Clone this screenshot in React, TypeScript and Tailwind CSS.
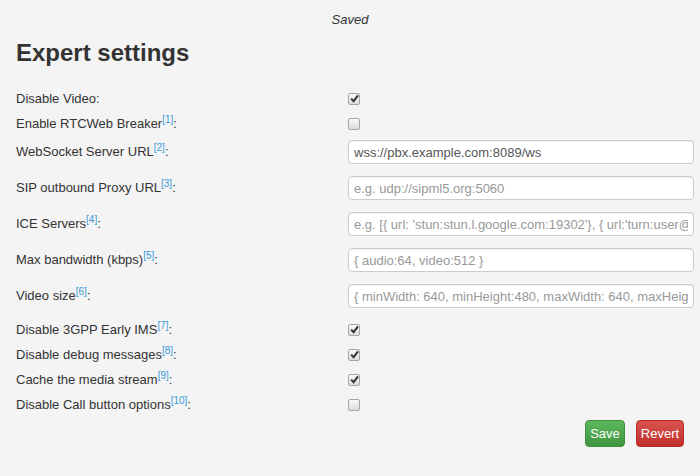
import React from "react";

type Row =
  | { kind: "check"; label: string; ref?: number; checked: boolean }
  | { kind: "text"; label: string; ref?: number; value?: string; placeholder?: string };

const top: Row[] = [
  { kind: "check", label: "Disable Video", checked: true },
  { kind: "check", label: "Enable RTCWeb Breaker", ref: 1, checked: false },
];

const fields: Row[] = [
  { kind: "text", label: "WebSocket Server URL", ref: 2, value: "wss://pbx.example.com:8089/ws" },
  { kind: "text", label: "SIP outbound Proxy URL", ref: 3, placeholder: "e.g. udp://sipml5.org:5060" },
  {
    kind: "text",
    label: "ICE Servers",
    ref: 4,
    placeholder: "e.g. [{ url: 'stun:stun.l.google.com:19302'}, { url:'turn:user@numb.viagenie.ca', credential:'myPassword'}]",
  },
  { kind: "text", label: "Max bandwidth (kbps)", ref: 5, placeholder: "{ audio:64, video:512 }" },
  {
    kind: "text",
    label: "Video size",
    ref: 6,
    placeholder: "{ minWidth: 640, minHeight:480, maxWidth: 640, maxHeight:480 }",
  },
];

const bottom: Row[] = [
  { kind: "check", label: "Disable 3GPP Early IMS", ref: 7, checked: true },
  { kind: "check", label: "Disable debug messages", ref: 8, checked: true },
  { kind: "check", label: "Cache the media stream", ref: 9, checked: true },
  { kind: "check", label: "Disable Call button options", ref: 10, checked: false },
];

const Label = ({ text, n }: { text: string; n?: number }) => (
  <label className="w-[332px] shrink-0 text-[13px] leading-[16px] text-[#333]">
    {text}
    {n !== undefined && <sup className="text-[10px] text-[#3a9ad9]">[{n}]</sup>}
    :
  </label>
);

const Check = ({ on }: { on: boolean }) => (
  <span className="flex h-[12px] w-[12px] items-center justify-center rounded-[2px] border border-[#a6a6a6] bg-gradient-to-b from-[#fafafa] to-[#dcdcdc]">
    {on && (
      <svg viewBox="0 0 10 10" className="h-[9px] w-[9px]">
        <path d="M1.3 5.2 L4 8 L8.9 1.6" fill="none" stroke="#333" strokeWidth="2.2" />
      </svg>
    )}
  </span>
);

const CheckRow = ({ r }: { r: Extract<Row, { kind: "check" }> }) => (
  <div className="flex h-[25px] items-center">
    <Label text={r.label} n={r.ref} />
    <Check on={r.checked} />
  </div>
);

export default function App() {
  return (
    <div
      className="min-h-[476px] bg-[#f4f4f4]"
      style={{ fontFamily: '"Liberation Sans", Arial, sans-serif' }}
    >
      <div className="pt-[12px] text-center text-[13px] italic leading-[16px] text-[#333]">Saved</div>

      <div className="pl-[16px] pr-[6px]">
        <h1 className="mt-[10px] text-[24px] font-bold leading-[30px] text-[#333]">Expert settings</h1>

        <div className="mt-[18px]">
          {top.map((r) => r.kind === "check" && <CheckRow key={r.label} r={r} />)}
        </div>

        <div className="-mt-[2px]">
          {fields.map(
            (r) =>
              r.kind === "text" && (
                <div key={r.label} className="flex h-[36px] items-center">
                  <Label text={r.label} n={r.ref} />
                  <input
                    readOnly
                    defaultValue={r.value}
                    placeholder={r.placeholder}
                    className="h-[24px] min-w-0 flex-1 rounded-[4px] border border-[#ccc] bg-white px-[5px] text-[13px] text-[#555] shadow-[inset_0_1px_1px_rgba(0,0,0,0.075)] outline-none placeholder:text-[#999]"
                  />
                </div>
              )
          )}
        </div>

        <div className="mt-[3px]">
          {bottom.map((r) => r.kind === "check" && <CheckRow key={r.label} r={r} />)}
        </div>

        <div className="mt-[3px] flex justify-end gap-[11px] pr-[10px]">
          <button className="h-[27px] w-[40px] rounded-[4px] border border-[#3e8f3e] bg-gradient-to-b from-[#5cb85c] to-[#419641] text-[13px] text-white">
            Save
          </button>
          <button className="h-[27px] w-[48px] rounded-[4px] border border-[#b92c28] bg-gradient-to-b from-[#d9534f] to-[#c12e2a] text-[13px] text-white">
            Revert
          </button>
        </div>
      </div>
    </div>
  );
}
